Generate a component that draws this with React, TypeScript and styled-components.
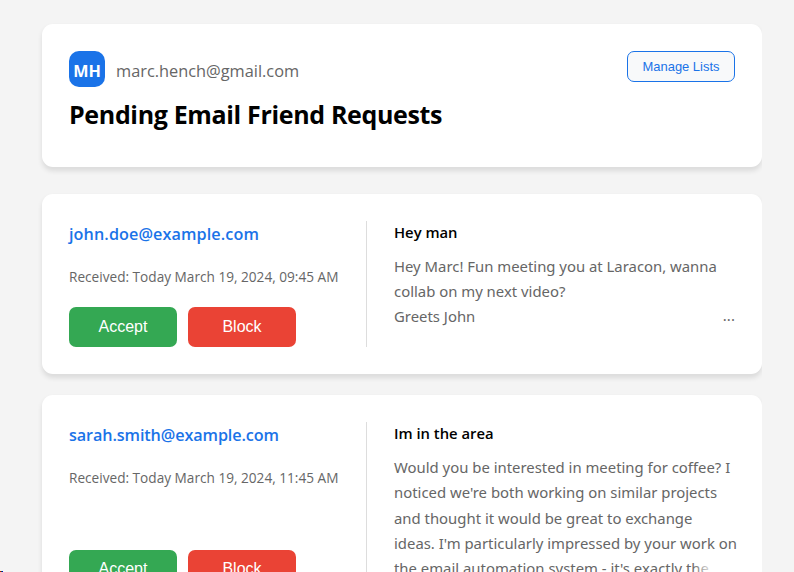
import React from "react";
import styled, { createGlobalStyle } from "styled-components";

const GlobalStyle = createGlobalStyle`
  * { box-sizing: border-box; }
  html, body { margin: 0; height: 572px; overflow: hidden; }
  body {
    background: #f4f4f4;
    color: #000;
    font-family: "Open Sans", "Noto Sans", sans-serif;
  }
`;

const Page = styled.main`
  width: 762px;
  height: 572px;
  padding: 24px 0 0 42px;
  overflow: hidden;
  display: flex;
  flex-direction: column;
`;

const Card = styled.section`
  flex: none;
  background: #fff;
  border-radius: 11px;
  padding: 27px;
  box-shadow: 0 3.6px 5.4px rgba(0, 0, 0, 0.1);
`;

const HeaderCard = styled(Card)`
  height: 143px;
  margin-bottom: 27px;
`;

const HeaderRow = styled.div`
  display: flex;
  align-items: flex-start;
  justify-content: space-between;
`;

const Account = styled.div`
  display: flex;
  align-items: center;
  gap: 11px;
`;

const Avatar = styled.div`
  width: 36px;
  height: 36px;
  border-radius: 10px;
  background: #1a73e8;
  color: #fff;
  display: flex;
  align-items: center;
  justify-content: center;
  padding-top: 4px;
  font-size: 16.2px;
  line-height: 20px;
  font-weight: 700;
`;

const AccountEmail = styled.span`
  color: #666;
  font-size: 16.35px;
  line-height: 24px;
  padding-top: 3px;
`;

const ManageButton = styled.button`
  width: 108px;
  height: 31px;
  padding: 0;
  border: 1px solid #1a73e8;
  border-radius: 7px;
  background: #f8f9fa;
  color: #1a73e8;
  font: 12.95px "Liberation Sans", Arial, sans-serif;
`;

const Title = styled.h1`
  margin: 8px 0 0;
  font-size: 25px;
  line-height: 38px;
  font-weight: 700;
  letter-spacing: -0.34px;
`;

const RequestList = styled.div`
  display: flex;
  flex-direction: column;
  gap: 21.2px;
`;

const RequestCard = styled(Card)<{ $height: number }>`
  display: flex;
  height: ${(p) => p.$height}px;
`;

const SenderColumn = styled.div`
  width: 298px;
  flex: none;
  border-right: 1px solid #ddd;
  display: flex;
  flex-direction: column;
`;

const Sender = styled.div<{ $tracking: number }>`
  color: #1a73e8;
  font-size: 16.2px;
  font-weight: 600;
  line-height: 26px;
  letter-spacing: ${(p) => p.$tracking}px;
`;

const Received = styled.div`
  margin-top: 20px;
  color: #666;
  font-size: 13.63px;
  line-height: 20px;
  white-space: nowrap;
`;

const Actions = styled.div`
  margin-top: auto;
  display: flex;
  gap: 11px;
`;

const ActionButton = styled.button<{ $color: string }>`
  width: 108px;
  height: 40px;
  padding: 0 0 1px;
  border: 0;
  border-radius: 7px;
  background: ${(p) => p.$color};
  color: #fff;
  font: 16px "Liberation Sans", Arial, sans-serif;
`;

const MessageColumn = styled.div`
  flex: 1;
  padding-left: 27px;
`;

const Subject = styled.div`
  font-size: 14.8px;
  font-weight: 600;
  line-height: 22px;
`;

const Message = styled.div`
  position: relative;
  margin-top: 11px;
  color: #666;
  font-family: "Noto Sans", "Open Sans", sans-serif;
  font-size: 14.88px;
  line-height: 25.2px;
  white-space: pre;
`;

const More = styled.span<{ $drop: number }>`
  position: absolute;
  right: 0;
  bottom: 1px;
  width: 45px;
  padding-top: ${(p) => p.$drop}px;
  margin-bottom: -${(p) => p.$drop}px;
  text-align: right;
  letter-spacing: 0.1px;
  background: linear-gradient(to right, rgba(255, 255, 255, 0), #fff 50%);
`;

interface Request {
  email: string;
  tracking: number;
  received: string;
  subject: string;
  lines: string[];
  height: number;
  moreDrop: number;
}

const requests: Request[] = [
  {
    email: "john.doe@example.com",
    tracking: 0.1,
    received: "Today March 19, 2024, 09:45 AM",
    subject: "Hey man",
    lines: ["Hey Marc! Fun meeting you at Laracon, wanna", "collab on my next video?", "Greets John"],
    height: 180,
    moreDrop: 0,
  },
  {
    email: "sarah.smith@example.com",
    tracking: -0.1,
    received: "Today March 19, 2024, 11:45 AM",
    subject: "Im in the area",
    lines: [
      "Would you be interested in meeting for coffee? I",
      "noticed we're both working on similar projects",
      "and thought it would be great to exchange",
      "ideas. I'm particularly impressed by your work on",
      "the email automation system - it's exactly the",
    ],
    height: 221.8,
    moreDrop: 3,
  },
];

const CornerMark = styled.div`
  position: fixed;
  left: 0;
  bottom: 0;
  width: 3px;
  height: 1px;
  background: linear-gradient(to right, #c00 1px, #063 1px 2px, #00c 2px);
`;

export default function App() {
  return (
    <>
      <GlobalStyle />
      <Page>
        <HeaderCard>
          <HeaderRow>
            <Account>
              <Avatar>MH</Avatar>
              <AccountEmail>marc.hench@gmail.com</AccountEmail>
            </Account>
            <ManageButton>Manage Lists</ManageButton>
          </HeaderRow>
          <Title>Pending Email Friend Requests</Title>
        </HeaderCard>
        <RequestList>
          {requests.map((r) => (
            <RequestCard key={r.email} $height={r.height}>
              <SenderColumn>
                <Sender $tracking={r.tracking}>{r.email}</Sender>
                <Received>Received: {r.received}</Received>
                <Actions>
                  <ActionButton $color="#34a853">Accept</ActionButton>
                  <ActionButton $color="#ea4335">Block</ActionButton>
                </Actions>
              </SenderColumn>
              <MessageColumn>
                <Subject>{r.subject}</Subject>
                <Message>
                  {r.lines.join("\n")}
                  <More $drop={r.moreDrop}>...</More>
                </Message>
              </MessageColumn>
            </RequestCard>
          ))}
        </RequestList>
      </Page>
      <CornerMark />
    </>
  );
}
